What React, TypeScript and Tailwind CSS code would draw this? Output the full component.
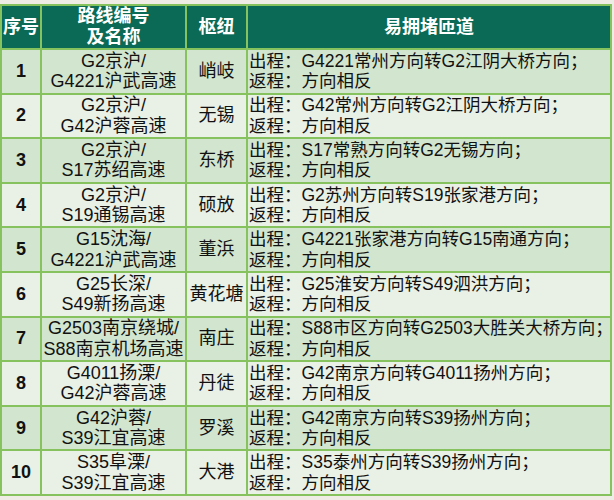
const ROWS = [
  { no: '1', route: ['G2京沪/', 'G4221沪武高速'], hub: '峭岐', out: 'G4221常州方向转G2江阴大桥方向；' },
  { no: '2', route: ['G2京沪/', 'G42沪蓉高速'], hub: '无锡', out: 'G42常州方向转G2江阴大桥方向；' },
  { no: '3', route: ['G2京沪/', 'S17苏绍高速'], hub: '东桥', out: 'S17常熟方向转G2无锡方向；' },
  { no: '4', route: ['G2京沪/', 'S19通锡高速'], hub: '硕放', out: 'G2苏州方向转S19张家港方向；' },
  { no: '5', route: ['G15沈海/', 'G4221沪武高速'], hub: '董浜', out: 'G4221张家港方向转G15南通方向；' },
  { no: '6', route: ['G25长深/', 'S49新扬高速'], hub: '黄花塘', out: 'G25淮安方向转S49泗洪方向；' },
  { no: '7', route: ['G2503南京绕城/', 'S88南京机场高速'], hub: '南庄', out: 'S88市区方向转G2503大胜关大桥方向；' },
  { no: '8', route: ['G4011扬溧/', 'G42沪蓉高速'], hub: '丹徒', out: 'G42南京方向转G4011扬州方向；' },
  { no: '9', route: ['G42沪蓉/', 'S39江宜高速'], hub: '罗溪', out: 'G42南京方向转S39扬州方向；' },
  { no: '10', route: ['S35阜溧/', 'S39江宜高速'], hub: '大港', out: 'S35泰州方向转S39扬州方向；' },
];

export default function App() {
  return (
    <div
      className="w-[614px] h-[500px] overflow-hidden bg-[#eeece4] pt-[4px]"
      style={{ fontFamily: '"Liberation Sans", "Noto Sans CJK SC", sans-serif' }}
    >
      <table className="w-[612px] table-fixed border-collapse border-2 border-[#86c25e] text-[#111]">
        <colgroup>
          <col className="w-[40px]" />
          <col className="w-[145px]" />
          <col className="w-[61px]" />
          <col />
        </colgroup>
        <thead>
          <tr className="h-[43px] bg-[#0a6a55] text-white font-bold text-[18px] leading-[21px]">
            <th className="border-2 border-[#86c25e] p-0">序号</th>
            <th className="border-2 border-[#86c25e] p-0">
              <div>路线编号</div>
              <div>及名称</div>
            </th>
            <th className="border-2 border-[#86c25e] p-0">枢纽</th>
            <th className="border-2 border-[#86c25e] p-0">易拥堵匝道</th>
          </tr>
        </thead>
        <tbody>
          {ROWS.map((r, i) => (
            <tr key={r.no} className={`h-[44.6px] ${i % 2 === 0 ? 'bg-[#d2e5ce]' : 'bg-[#e9f0e6]'}`}>
              <td className="border-2 border-[#86c25e] p-0 text-center font-bold text-[18px]">{r.no}</td>
              <td className="border-2 border-[#86c25e] p-0 text-center text-[18px] leading-[20.5px] whitespace-nowrap">
                <div>{r.route[0]}</div>
                <div>{r.route[1]}</div>
              </td>
              <td className="border-2 border-[#86c25e] p-0 text-center text-[18px] whitespace-nowrap">{r.hub}</td>
              <td className="border-2 border-[#86c25e] pl-[1px] py-0 pr-0 text-left text-[17.5px] leading-[20.5px] whitespace-nowrap">
                <div>出程：{r.out}</div>
                <div>返程：方向相反</div>
              </td>
            </tr>
          ))}
        </tbody>
      </table>
    </div>
  );
}
